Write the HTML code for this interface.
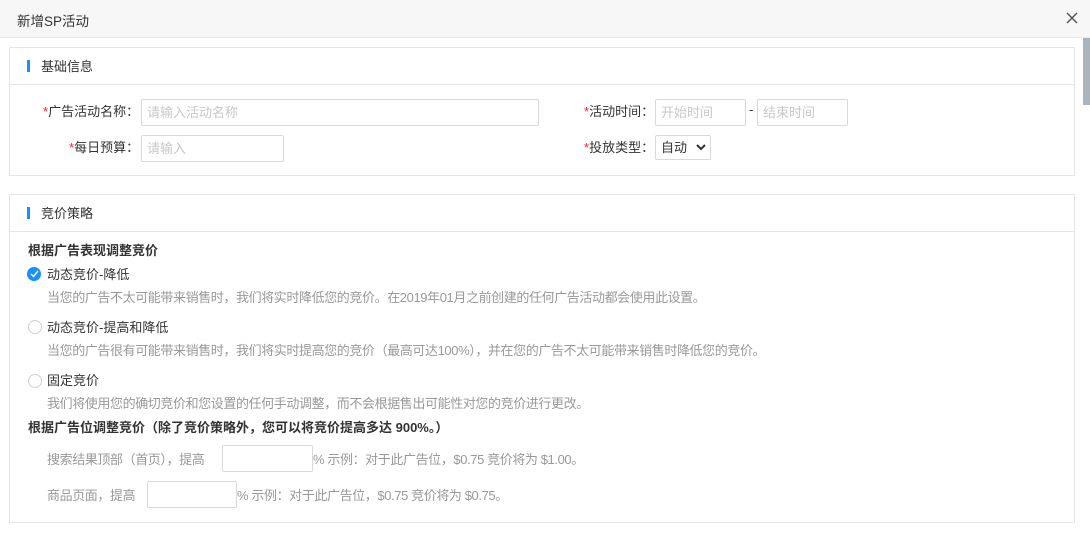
<!DOCTYPE html>
<html><head><meta charset="utf-8"><style>
*{box-sizing:border-box;margin:0;padding:0}
body{width:1090px;height:540px;overflow:hidden;background:#fff;font-family:"Liberation Sans","Noto Sans CJK SC",sans-serif;font-size:13px;color:#333;position:relative}
.abs{position:absolute;white-space:nowrap}
span.abs{margin-top:-2px}
.hdr{position:absolute;left:0;top:0;width:1090px;height:38px;background:#f7f7f7;border-bottom:1px solid #e8e8e8}
.card{position:absolute;left:9px;width:1066px;border:1px solid #e5e5e5}
.ch{height:37px;border-bottom:1px solid #e5e5e5;position:relative}
.bar{position:absolute;left:17px;top:12px;width:3px;height:12px;background:#1890ff}
.inp{position:absolute;border:1px solid #d9d9d9;border-radius:2px;height:27px;color:#c8c8c8;padding-left:5px;line-height:25px;background:#fff}
.r{color:#f5222d}
.gray{color:#999;letter-spacing:-0.4px}
.radio{position:absolute;width:14px;height:14px;border-radius:50%;border:1px solid #d0d0d0;background:#fff}
</style></head><body>
<div class="hdr"><span class="abs" style="left:17px;top:12px;font-size:13.5px">新增SP活动</span>
<svg class="abs" style="left:1066px;top:12px" width="12" height="12" viewBox="0 0 12 12"><path d="M1 1L11 11M11 1L1 11" stroke="#555" stroke-width="1.5"/></svg></div>
<div class="abs" style="left:1083px;top:38px;width:7px;height:67px;background:#a9b4bc"></div>

<div class="card" style="top:47px;height:129px">
<div class="ch"><div class="bar"></div><span class="abs" style="left:31px;top:10px">基础信息</span></div>
</div>
<span class="abs" style="left:43px;top:103px"><span class="r">*</span>广告活动名称：</span>
<div class="inp" style="left:141px;top:99px;width:398px">请输入活动名称</div>
<span class="abs" style="left:69px;top:139px"><span class="r">*</span>每日预算：</span>
<div class="inp" style="left:141px;top:135px;width:143px">请输入</div>
<span class="abs" style="left:584px;top:103px"><span class="r">*</span>活动时间：</span>
<div class="inp" style="left:655px;top:99px;width:91px">开始时间</div>
<span class="abs" style="left:749px;top:104px">-</span>
<div class="inp" style="left:757px;top:99px;width:91px">结束时间</div>
<span class="abs" style="left:584px;top:139px"><span class="r">*</span>投放类型：</span>
<div class="inp" style="left:655px;top:135px;width:56px;height:25px;color:#333;line-height:23px">自动</div>
<svg class="abs" style="left:696px;top:144px" width="10" height="7" viewBox="0 0 10 7"><path d="M1 1L5 5L9 1" stroke="#333" stroke-width="2" fill="none"/></svg>

<div class="card" style="top:194px;height:329px">
<div class="ch"><div class="bar"></div><span class="abs" style="left:31px;top:10px">竞价策略</span></div>
</div>
<span class="abs" style="left:28px;top:242px;font-weight:bold">根据广告表现调整竞价</span>
<div class="radio" style="left:27px;top:267px;background:#1890ff;border-color:#1890ff"></div>
<svg class="abs" style="left:30px;top:270px" width="9" height="8" viewBox="0 0 9 8"><path d="M1 4L3.5 6.5L8 1" stroke="#fff" stroke-width="1.4" fill="none"/></svg>
<span class="abs" style="left:47px;top:266px">动态竞价-降低</span>
<span class="abs gray" style="left:47px;top:289px">当您的广告不太可能带来销售时，我们将实时降低您的竞价。在2019年01月之前创建的任何广告活动都会使用此设置。</span>
<div class="radio" style="left:28px;top:320px"></div>
<span class="abs" style="left:47px;top:319px">动态竞价-提高和降低</span>
<span class="abs gray" style="left:47px;top:342px">当您的广告很有可能带来销售时，我们将实时提高您的竞价（最高可达100%），并在您的广告不太可能带来销售时降低您的竞价。</span>
<div class="radio" style="left:28px;top:374px"></div>
<span class="abs" style="left:47px;top:372px">固定竞价</span>
<span class="abs gray" style="left:47px;top:395px">我们将使用您的确切竞价和您设置的任何手动调整，而不会根据售出可能性对您的竞价进行更改。</span>
<span class="abs" style="left:28px;top:419px;font-weight:bold">根据广告位调整竞价（除了竞价策略外，您可以将竞价提高多达 900%。）</span>
<span class="abs gray" style="left:47px;top:451px">搜索结果顶部（首页），提高</span>
<div class="inp" style="left:222px;top:445px;width:91px"></div>
<span class="abs gray" style="left:313px;top:451px">% 示例：对于此广告位，$0.75 竞价将为 $1.00。</span>
<span class="abs gray" style="left:47px;top:487px">商品页面，提高</span>
<div class="inp" style="left:147px;top:481px;width:90px"></div>
<span class="abs gray" style="left:237px;top:487px">% 示例：对于此广告位，$0.75 竞价将为 $0.75。</span>
</body></html>
